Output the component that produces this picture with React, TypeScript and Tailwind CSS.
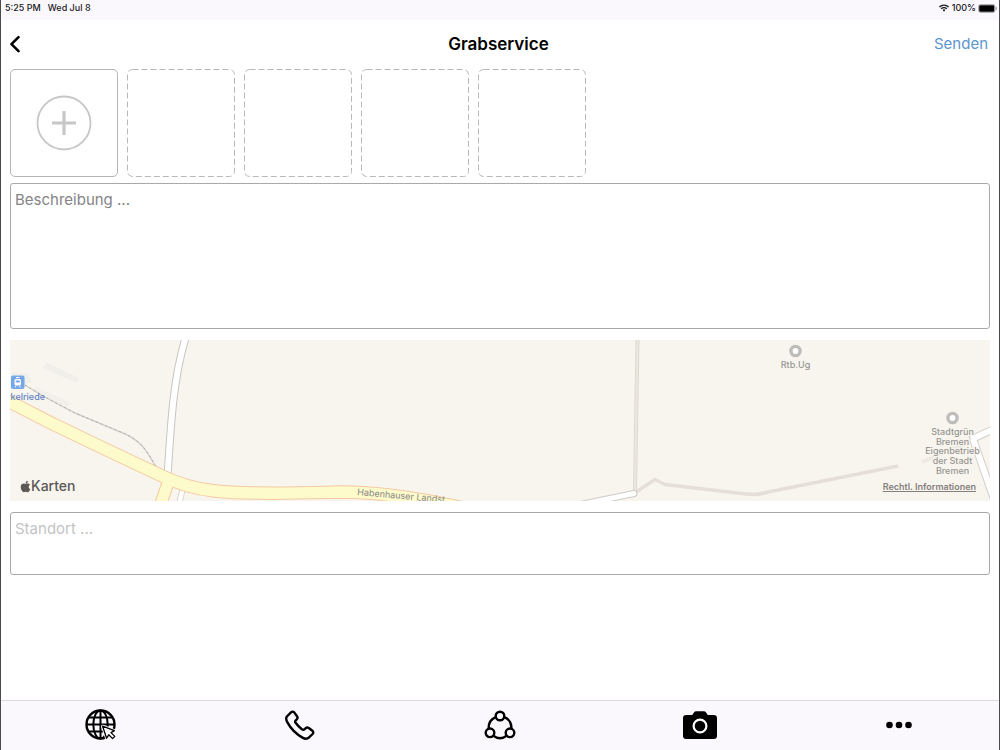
import React, { useState } from 'react';
import { FaApple } from 'react-icons/fa';

const MAX_PHOTOS = 5;

const WifiIcon = () => (
  <svg viewBox="0 0 12 9" className="w-3 h-2" fill="none" stroke="#1a1a1c" strokeWidth="1.6">
    <path d="M0.8 3.4C3.8 0.5 8.2 0.5 11.2 3.4" />
    <path d="M2.8 5.4C4.6 3.6 7.4 3.6 9.2 5.4" />
    <path d="M4.4 6.6C5.4 5.8 6.6 5.8 7.6 6.6L6 8.6Z" fill="#1a1a1c" stroke="none" />
  </svg>
);

const BatteryIcon = () => (
  <svg viewBox="0 0 19 9" className="w-[19px] h-[9px]">
    <rect x="0.5" y="0.5" width="16.5" height="8" rx="2" fill="none" stroke="#9a9a9c" strokeWidth="0.8" />
    <rect x="1.2" y="1.2" width="15.1" height="6.6" rx="1.2" fill="#000" />
    <path d="M18.2 3.2v2.6" stroke="#8a8a8c" strokeWidth="1" />
  </svg>
);

const GlobeIcon = () => (
  <svg viewBox="0 0 32 32" className="w-8 h-8" fill="none" stroke="#000" strokeWidth="2">
    <circle cx="15.5" cy="15.5" r="14" strokeWidth="2.4" />
    <ellipse cx="15.5" cy="15.5" rx="7.2" ry="14" />
    <path d="M15.500 1.500v28M1.500 15.500h28M3.900 8.500h23.200M3.900 22.500h23.200" />
    <path
      d="M17.600 17.200L29.400 21.600L26 23.600L29.800 27.400L27.600 29.600L23.800 25.800L21.600 29.200Z"
      fill="#fff"
      stroke="#fff"
      strokeWidth="3"
      strokeLinejoin="round"
    />
    <path
      d="M17.600 17.200L29.400 21.600L26 23.600L29.800 27.400L27.600 29.600L23.800 25.800L21.600 29.200Z"
      fill="#fff"
      strokeWidth="1.3"
      strokeLinejoin="round"
    />
  </svg>
);

const PhoneIcon = () => (
  <svg viewBox="0 0 30 30" className="w-[30px] h-[30px]" fill="none" stroke="#000" strokeWidth="2.4" strokeLinejoin="round">
    <path d="M1.9 6.5L6 2.4C7 1.4 8.3 1.4 9.2 2.4L12 6.2C12.8 7.3 12.6 8.4 11.8 9.3L10.6 10.5C10 11.3 10 12 10.6 12.8C12.3 15.2 14.8 17.7 17.2 19.4C18 20 18.7 20 19.5 19.4L20.7 18.2C21.6 17.4 22.7 17.3 23.8 18L27.4 20.8C28.4 21.6 28.5 23 27.6 24L23.8 27.6C22.5 28.8 20 29 17.5 27.6C11 24 5.8 18.6 2.4 12.4C1.2 10.2 0.9 7.8 1.9 6.5Z" />
  </svg>
);

const NetworkIcon = () => (
  <svg viewBox="0 0 32 30" className="w-8 h-[30px]" fill="none" stroke="#000" strokeWidth="2.4">
    <circle cx="16" cy="6" r="4.3" />
    <circle cx="6" cy="22.8" r="4.3" />
    <circle cx="26" cy="22.8" r="4.3" />
    <path d="M11.8 7.2C6.8 9.2 4.4 13.4 4.6 18.6" />
    <path d="M20.2 7.2C25.2 9.2 27.6 13.4 27.4 18.6" />
    <path d="M9.6 25.8C13.4 29 18.6 29 22.4 25.8" />
  </svg>
);

const CameraIcon = () => (
  <svg viewBox="0 0 34 28" className="w-[34px] h-7">
    <path
      d="M3 4H9.2L11 1.4C11.5 0.6 12.2 0.2 13 0.2H21C21.8 0.2 22.5 0.6 23 1.4L24.8 4H31C32.8 4 34 5.2 34 7V25C34 26.8 32.8 28 31 28H3C1.2 28 0 26.8 0 25V7C0 5.2 1.2 4 3 4Z"
      fill="#000"
    />
    <circle cx="17" cy="15" r="6.4" fill="none" stroke="#fff" strokeWidth="2.2" />
  </svg>
);

const MoreIcon = () => (
  <svg viewBox="0 0 26 8" className="w-[26px] h-2">
    <circle cx="3.5" cy="4" r="3.3" />
    <circle cx="13" cy="4" r="3.3" />
    <circle cx="22.5" cy="4" r="3.3" />
  </svg>
);

const tabs = [
  { label: 'Web', icon: <GlobeIcon /> },
  { label: 'Anrufen', icon: <PhoneIcon /> },
  { label: 'Netzwerk', icon: <NetworkIcon /> },
  { label: 'Kamera', icon: <CameraIcon /> },
  { label: 'Mehr', icon: <MoreIcon /> },
];

const mainRoad = 'M-8 58L0 62L43 84L95 109L150 135C168 144 185 149 205 151C240 155 290 153 330 152C370 152 415 159 462 170';
const railway = 'M15 45L33 56L65 73L108 91C130 99 136 109 146 127';
const farmRoad = 'M175.5 -2C164 36 161 78 157.5 138';

const mapLabel = {
  fontSize: 9,
  fontWeight: 500,
  textAnchor: 'middle' as const,
  fill: '#979591',
  stroke: '#f8f5ef',
  strokeWidth: 2,
  paintOrder: 'stroke',
};

function MapView() {
  return (
    <div className="relative h-[161px] mt-[11px] overflow-hidden bg-[#f8f5ef]">
      <svg
        viewBox="0 0 980 161"
        preserveAspectRatio="xMidYMid slice"
        className="block w-full h-full font-['Inter','Liberation_Sans',sans-serif]"
        fill="none"
      >
        {/* Gebäude */}
        <path d="M36 22L69 38L66 43L33 28ZM26 47L61 63L58 67L24 52ZM0 33H17L22 42L14 44Z" fill="#f1efea" />

        {/* Wege */}
        <path d="M627.5 0L625 151" stroke="#dcd9d0" strokeWidth="4" />
        <path d="M627.5 0L625 151" stroke="#ebe8de" strokeWidth="2" />
        <path
          d="M626 152L645 139.5L655 144.5L736 154C744 155 750 154.5 758 152L888 126"
          stroke="#e5dfd7"
          strokeWidth="3.5"
          strokeLinejoin="round"
        />
        <path d="M912 122L962 101" stroke="#eeeae2" strokeWidth="4" />

        {/* Nebenstraßen */}
        <path d="M573 164L624 153.5" stroke="#cfcbc8" strokeWidth="7" strokeLinecap="round" />
        <path d="M984 89L960 100M963 99L985 162" stroke="#d3cfcb" strokeWidth="8" />
        <path d={farmRoad} stroke="#c9c6c2" strokeWidth="8" />
        <path d="M173 148L169 164" stroke="#d3cfcb" strokeWidth="6" />
        <path d="M573 164L624 153.5" stroke="#fff" strokeWidth="5" strokeLinecap="round" />
        <path d="M984 89L961 99.5M963 99L985 162" stroke="#fff" strokeWidth="6" />
        <path d={farmRoad} stroke="#fff" strokeWidth="6" />
        <path d="M173 148L169 164" stroke="#fff" strokeWidth="4.5" />

        {/* Bahnlinie */}
        <path d={railway} stroke="#d2cfcb" strokeWidth="1.4" />
        <path d={railway} stroke="#b0aeab" strokeWidth="1" strokeDasharray="2 3" />

        {/* Hauptstraße */}
        <path d="M159 140L150 166" stroke="#f5c8a0" strokeWidth="13" />
        <path d={mainRoad} stroke="#f5c8a0" strokeWidth="13.5" />
        <path d="M159 140L150 166" stroke="#fdfacb" strokeWidth="11" />
        <path d={mainRoad} stroke="#fdfacb" strokeWidth="11.5" />
        <text x="347" y="155" fontSize="9" fill="#8a8986" transform="rotate(5 347 155)">
          Habenhauser Landst
        </text>

        {/* Haltestelle */}
        <rect x="1" y="35.5" width="13.5" height="13.5" rx="2" fill="#73a7e8" />
        <rect x="4.5" y="39" width="6.5" height="6.5" rx="1.5" fill="#fff" />
        <path d="M6 37.5h3.5M5 47.5l1-1.5M10.5 47.5l-1-1.5" stroke="#fff" />
        <path d="M5.8 41.5h4" stroke="#73a7e8" strokeWidth="2" />
        <text x="35" y="60" fontSize="9" fontWeight="500" fill="#6383c4" textAnchor="end">
          kelriede
        </text>

        <circle cx="785.5" cy="11" r="4.6" stroke="#bfbdba" strokeWidth="3.4" fill="#fff" />
        <text x="785.5" y="28" style={mapLabel}>Rtb.Ug</text>

        <circle cx="942.5" cy="78" r="4.6" stroke="#bfbdba" strokeWidth="3.4" fill="#fff" />
        <text style={mapLabel}>
          <tspan x="942.5" y="95">Stadtgrün</tspan>
          <tspan x="942.5" y="105">Bremen</tspan>
          <tspan x="942.5" y="114">Eigenbetrieb</tspan>
          <tspan x="942.5" y="124">der Stadt</tspan>
          <tspan x="942.5" y="134">Bremen</tspan>
        </text>
      </svg>
      <span className="absolute left-2.5 bottom-1.5 flex items-center text-sm leading-[18px] font-medium text-[#5b5856]">
        <FaApple className="w-[11px] h-[13px]" />
        Karten
      </span>
      <a href="#legal" className="absolute right-3.5 bottom-2 text-[9px] leading-3 font-semibold text-[#85807c] underline">
        Rechtl. Informationen
      </a>
    </div>
  );
}

function App() {
  const [description, setDescription] = useState('');
  const [location, setLocation] = useState('');

  return (
    <div className="min-h-screen flex flex-col bg-white border-x border-[#4a4a4c] font-['Inter','Liberation_Sans',sans-serif]">
      {/* Statusleiste */}
      <div className="h-5 pl-1 pr-0.5 pb-1 flex items-center justify-between bg-[#faf8fc] text-[9px] font-medium text-[#1a1a1c]">
        <div className="flex gap-[7px]">
          <span>5:25 PM</span>
          <span>Wed Jul 8</span>
        </div>
        <div className="flex items-center gap-0.5">
          <WifiIcon />
          <span>100%</span>
          <BatteryIcon />
        </div>
      </div>

      <header className="h-12 pl-2 pr-[11px] grid grid-cols-[1fr_auto_1fr] items-center">
        <button aria-label="Zurück" className="justify-self-start">
          <svg viewBox="0 0 12 18" className="w-3 h-[18px]" fill="none" stroke="#000" strokeWidth="2.6" strokeLinecap="round" strokeLinejoin="round">
            <path d="M9.5 2.2L2.5 9.2L9.5 16.2" />
          </svg>
        </button>
        <h1 className="text-[17px] leading-6 font-semibold text-black">Grabservice</h1>
        <button className="justify-self-end text-[15px] leading-6 text-[#5b95d0]">Senden</button>
      </header>

      <main className="flex-1 flex flex-col px-[9px] pt-px">
        {/* Fotos */}
        <div className="flex gap-[9px]">
          <button
            aria-label="Foto hinzufügen"
            className="w-[108px] h-[108px] flex items-center justify-center border border-[#b5b5b7] rounded-[5px]"
          >
            <svg viewBox="0 0 56 56" className="w-14 h-14" fill="none" stroke="#c8c6c7">
              <circle cx="28" cy="28" r="26.5" strokeWidth="1.8" />
              <path d="M28 16v24M16 28h24" strokeWidth="3.2" />
            </svg>
          </button>
          {Array.from({ length: MAX_PHOTOS - 1 }, (_, i) => (
            <div key={i} className="w-[108px] h-[108px]">
              <svg viewBox="0 0 108 108" className="w-full h-full" fill="none" stroke="#b9b7b9">
                <rect x="0.5" y="0.5" width="107" height="107" rx="5" strokeDasharray="6 3" />
              </svg>
            </div>
          ))}
        </div>

        <textarea
          aria-label="Beschreibung"
          placeholder="Beschreibung ..."
          value={description}
          onChange={e => setDescription(e.target.value)}
          className="block w-full h-[146px] mt-1.5 px-1 py-1 text-[15px] leading-6 text-black border border-[#a9a9ab] rounded-[3px] resize-none placeholder:text-[#858487]"
        />

        <MapView />

        <textarea
          aria-label="Standort"
          placeholder="Standort ..."
          value={location}
          onChange={e => setLocation(e.target.value)}
          className="block w-full h-[63px] mt-[11px] px-1 py-1 text-[15px] leading-6 text-black border border-[#a9a9ab] rounded-[3px] resize-none placeholder:text-[#c4c3c6]"
        />
      </main>

      <nav className="h-[50px] pb-px grid grid-cols-5 bg-[#faf8fc] border-t border-[#dcdadd]">
        {tabs.map(tab => (
          <button key={tab.label} aria-label={tab.label} className="flex items-center justify-center">
            {tab.icon}
          </button>
        ))}
      </nav>
    </div>
  );
}

export default App;
